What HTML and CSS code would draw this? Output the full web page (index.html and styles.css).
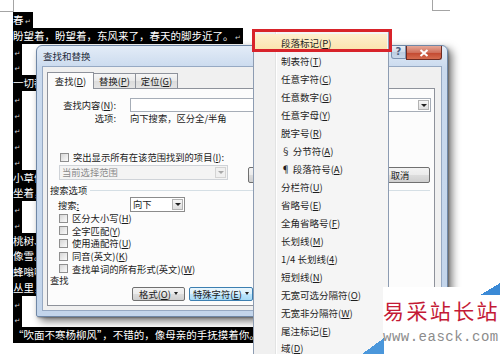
FILE: index.html
```html
<!DOCTYPE html>
<html lang="zh-CN">
<head>
    <meta charset="UTF-8">
    <title>查找和替换 - 特殊字符</title>
    <link rel="stylesheet" href="styles.css">
</head>
<body>
    <!-- Word page behind the dialog (only the visible part of each line) -->
    <div id="page">
        <div class="marks">
            <div class="mark-left"></div>
            <div class="mark-right"></div>
        </div>
        <div class="doc">
            <div class="line"><span class="sel">春<i class="pm">↵</i></span></div>
            <div class="line"><span class="sel">盼望着，盼望着，东风来了，春天的脚步近了。<i class="pm">↵</i></span></div>
            <div class="line"><span class="sel"><i class="pm">↵</i></span></div>
            <div class="line"><span class="sel"><i class="pm">↵</i></span></div>
            <div class="line"><span class="sel">一切都</span></div>
            <div class="line"><span class="sel"><i class="pm">↵</i></span></div>
            <div class="line"><span class="sel"><i class="pm">↵</i></span></div>
            <div class="line"><span class="sel"><i class="pm">↵</i></span></div>
            <div class="line"><span class="sel"><i class="pm">↵</i></span></div>
            <div class="line"><span class="sel"><i class="pm">↵</i></span></div>
            <div class="line"><span class="sel">小草偷</span></div>
            <div class="line"><span class="sel">坐着，</span></div>
            <div class="line"><span class="sel"><i class="pm">↵</i></span></div>
            <div class="line"><span class="sel"><i class="pm">↵</i></span></div>
            <div class="line"><span class="sel">桃树、</span></div>
            <div class="line"><span class="sel">像雪。</span></div>
            <div class="line"><span class="sel">蜂嗡嗡</span></div>
            <div class="line"><span class="sel">丛里，</span></div>
            <div class="line"><span class="sel"><i class="pm">↵</i></span></div>
            <div class="line"><span class="sel"><i class="pm">↵</i></span></div>
            <div class="line"><span class="sel">“吹面不寒杨柳风”，不错的，像母亲的手抚摸着你。</span></div>
        </div>
    </div>

    <!-- Find and replace dialog -->
    <div id="dialog">
        <div class="titlebar">
            <span class="title">查找和替换</span>
            <div class="caption-btns">
                <span class="btn-help">?</span>
                <span class="btn-close">
                    <svg width="10" height="8" viewBox="0 0 10 8"><path d="M1.5 1 L8.5 7 M8.5 1 L1.5 7" stroke="#fff" stroke-width="2"/></svg>
                </span>
            </div>
        </div>
        <div class="client">
            <div class="tabs">
                <span class="tab active">查找(<u>D</u>)</span>
                <span class="tab">替换(<u>P</u>)</span>
                <span class="tab">定位(<u>G</u>)</span>
            </div>
            <div class="panel">
                <div class="row find-row">
                    <span class="lbl">查找内容(<u>N</u>):</span>
                    <div class="combo find-box"><span class="val"></span><span class="drop"></span></div>
                </div>
                <div class="row opts-row">
                    <span class="lbl">选项:</span>
                    <span class="opts">向下搜索，区分全/半角</span>
                </div>
                <div class="row hl-row">
                    <span class="cb"></span>
                    <span>突出显示所有在该范围找到的项目(<u>I</u>):</span>
                </div>
                <div class="row range-row">
                    <div class="combo range-box disabled"><span class="val">当前选择范围</span><span class="drop"></span></div>
                    <span class="btn more-btn"></span>
                    <span class="btn cancel-btn">取消</span>
                </div>
                <div class="row group-row">
                    <span>搜索选项</span>
                    <span class="rule"></span>
                </div>
                <div class="row search-row">
                    <span class="search-lbl">搜索<u>:</u></span>
                    <div class="combo dir-box"><span class="val">向下</span><span class="drop"></span></div>
                </div>
                <div class="checks">
                    <div class="row cb-row"><span class="cb"></span><span>区分大小写(<u>H</u>)</span></div>
                    <div class="row cb-row"><span class="cb"></span><span>全字匹配(<u>Y</u>)</span></div>
                    <div class="row cb-row"><span class="cb"></span><span>使用通配符(<u>U</u>)</span></div>
                    <div class="row cb-row"><span class="cb"></span><span>同音(英文)(<u>K</u>)</span></div>
                    <div class="row cb-row"><span class="cb"></span><span>查找单词的所有形式(英文)(<u>W</u>)</span></div>
                </div>
                <div class="row find-group">查找</div>
                <div class="row btn-row">
                    <span class="btn fmt-btn">格式(<u>O</u>)<i class="caret"></i></span>
                    <span class="btn special-btn">特殊字符(<u>E</u>)<i class="caret"></i></span>
                </div>
            </div>
        </div>
    </div>

    <!-- Special characters menu -->
    <div id="menu">
        <div class="item hot">段落标记(<u>P</u>)</div>
        <div class="item">制表符(<u>T</u>)</div>
        <div class="item">任意字符(<u>C</u>)</div>
        <div class="item">任意数字(<u>G</u>)</div>
        <div class="item">任意字母(<u>Y</u>)</div>
        <div class="item">脱字号(<u>R</u>)</div>
        <div class="item">§ 分节符(<u>A</u>)</div>
        <div class="item">¶ 段落符号(<u>A</u>)</div>
        <div class="item">分栏符(<u>U</u>)</div>
        <div class="item">省略号(<u>E</u>)</div>
        <div class="item">全角省略号(<u>F</u>)</div>
        <div class="item">长划线(<u>M</u>)</div>
        <div class="item">1/4 长划线(<u>4</u>)</div>
        <div class="item">短划线(<u>N</u>)</div>
        <div class="item">无宽可选分隔符(<u>O</u>)</div>
        <div class="item">无宽非分隔符(<u>W</u>)</div>
        <div class="item">尾注标记(<u>E</u>)</div>
        <div class="item last">域(<u>D</u>)</div>
    </div>
    <div id="redbox"></div>

    <!-- Site watermark -->
    <div id="wm">
        <div class="wm-cn">易采站长站</div>
        <div class="wm-url">www.easck.com</div>
    </div>
</body>
</html>
```

FILE: styles.css
```css
body {
    margin: 0;
    width: 500px;
    height: 354px;
    overflow: hidden;
    position: relative;
    background-color: #ffffff;
    font-family: "Noto Sans CJK SC", "Noto Sans", sans-serif;
    color: #1a1a1a;
}

u {
    text-decoration: underline;
    text-underline-offset: 1px;
}

/* page */

.marks {
    display: flex;
    align-items: flex-start;
    height: 12px;
}

.mark-left {
    width: 14px;
    height: 12px;
    box-sizing: border-box;
    border-right: 1px solid #a4a4a4;
    border-bottom: 1px solid #a4a4a4;
}

.mark-right {
    margin-left: 418px;
    width: 18px;
    height: 11px;
    box-sizing: border-box;
    border-left: 1px solid #a4a4a4;
    border-bottom: 1px solid #a4a4a4;
}

.doc {
    padding-left: 13px;
}

.line {
    height: 15.75px;
    line-height: 15.75px;
    font-size: 10.5px;
    white-space: nowrap;
}

.sel {
    display: inline-block;
    height: 15.75px;
    vertical-align: top;
    background-color: #000000;
    color: #ffffff;
}

.pm {
    display: inline-block;
    width: 9px;
    text-align: center;
    font-style: normal;
    font-family: "DejaVu Sans", sans-serif;
    font-size: 7px;
    color: #d0d0d0;
}

/* dialog */

#dialog {
    position: absolute;
    left: 36px;
    top: 45px;
    width: 412px;
    height: 272px;
    box-sizing: border-box;
    padding: 0 5px 5px;
    display: flex;
    flex-direction: column;
    border: 1px solid #6f87a6;
    border-radius: 6px 6px 2px 2px;
    background: linear-gradient(#e3ecf7, #cadaee 22px, #c3d5eb);
    box-shadow: 4px 4px 9px rgba(0, 0, 0, 0.55), 1px 1px 2px rgba(0, 0, 0, 0.3);
}

.titlebar {
    display: flex;
    align-items: flex-start;
    height: 20px;
}

.title {
    padding-left: 1px;
    line-height: 20px;
    font-size: 9.5px;
    color: #1e2a3a;
}

.caption-btns {
    margin-left: auto;
    display: flex;
}

.btn-help {
    width: 15px;
    height: 13px;
    box-sizing: border-box;
    border: 1px solid #7d93b2;
    border-top: none;
    border-radius: 0 0 0 3px;
    background: linear-gradient(#e8eef6, #cfdbea 50%, #bccce1 51%, #c9d8ea);
    font: bold 10px/12px "DejaVu Sans", sans-serif;
    color: #4d6182;
    text-align: center;
}

.btn-close {
    width: 36px;
    height: 14px;
    box-sizing: border-box;
    display: flex;
    align-items: center;
    justify-content: center;
    border: 1px solid #6d2b22;
    border-top: none;
    border-radius: 0 0 3px 0;
    background: linear-gradient(#e6a898, #d0705c 50%, #c2472f 51%, #d66c4f);
}

.client {
    flex: 1;
    display: flex;
    flex-direction: column;
    box-sizing: border-box;
    padding: 5px 6px 4px 4px;
    border: 1px solid #96a9c3;
    background-color: #f0f0f0;
    font-size: 9.3px;
}

.tabs {
    display: flex;
    align-items: flex-end;
    height: 17px;
    margin-bottom: -1px;
    position: relative;
    z-index: 1;
}

.tab {
    width: 43px;
    height: 15px;
    margin-bottom: 1px;
    margin-left: -1px;
    box-sizing: border-box;
    border: 1px solid #8e929b;
    border-bottom: none;
    background: linear-gradient(#f6f6f6, #e9e9e9 50%, #dcdcdc 51%, #e4e4e4);
    text-align: center;
    line-height: 14px;
}

.tab.active {
    width: 47px;
    height: 17px;
    margin-bottom: 0;
    margin-left: 0;
    background: #fcfcfc;
    line-height: 16px;
}

.panel {
    flex: 1;
    display: flex;
    flex-direction: column;
    box-sizing: border-box;
    border: 1px solid #8e929b;
    background-color: #fcfcfc;
}

.row {
    display: flex;
    align-items: center;
    white-space: nowrap;
}

.lbl {
    width: 68px;
    text-align: right;
}

.find-row {
    height: 14px;
    margin-top: 9px;
}

.opts-row {
    height: 11px;
}

.opts {
    margin-left: 14px;
}

.combo {
    display: flex;
    align-items: stretch;
    box-sizing: border-box;
    border: 1px solid #a6adb7;
    background-color: #ffffff;
}

.combo .val {
    flex: 1;
    padding-left: 2px;
    line-height: 13px;
}

.combo .drop {
    width: 11px;
    margin: 1px;
    box-sizing: border-box;
    display: flex;
    align-items: center;
    justify-content: center;
    border: 1px solid #b3b3b3;
    background: linear-gradient(#f7f7f7, #dedede);
}

.combo .drop::after {
    content: "";
    border-left: 3px solid transparent;
    border-right: 3px solid transparent;
    border-top: 3px solid #222222;
}

.find-box {
    margin-left: 14px;
    width: 301px;
    height: 14px;
}

.hl-row {
    height: 12px;
    margin-top: 28px;
    padding-left: 12px;
}

.cb {
    width: 9px;
    height: 9px;
    margin-right: 4px;
    box-sizing: border-box;
    border: 1px solid #8f8f8f;
    background: linear-gradient(135deg, #d6d6d6, #fbfbfb);
}

.range-row {
    height: 18px;
    margin-top: 2px;
}

.range-box {
    align-self: flex-start;
    margin-left: 11px;
    width: 169px;
    height: 15px;
    background-color: #f4f4f4;
    border-color: #cfd3d8;
    color: #8a8a8a;
}

.range-box .drop {
    border-color: #d4d4d4;
    background: #f0f0f0;
}

.range-box .drop::after {
    border-top-color: #a8a8a8;
}

.btn {
    box-sizing: border-box;
    display: flex;
    align-items: center;
    justify-content: center;
    border: 1px solid #707070;
    border-radius: 2px;
    background: linear-gradient(#f3f3f3, #ebebeb 50%, #dddddd 51%, #cfcfcf);
}

.more-btn {
    align-self: flex-end;
    margin-left: 20px;
    width: 90px;
    height: 16px;
}

.cancel-btn {
    align-self: flex-end;
    margin-left: auto;
    margin-right: 4px;
    width: 60px;
    height: 16px;
}

.group-row {
    height: 12px;
    margin-top: 1px;
    padding-left: 2px;
}

.rule {
    flex: 1;
    height: 1px;
    margin: 0 4px 0 3px;
    background-color: #d5dfe5;
}

.search-row {
    height: 15px;
    margin-top: 1px;
}

.search-lbl {
    width: 82px;
    padding-left: 10px;
    box-sizing: border-box;
}

.dir-box {
    width: 55px;
    height: 15px;
    border-color: #8c8c8c;
}

.cb-row {
    height: 12.6px;
    padding-left: 11px;
}

.find-group {
    height: 10px;
    padding-left: 2px;
}

.btn-row {
    height: 14px;
    margin-top: 2px;
    padding-left: 84px;
}

.btn-row .btn {
    height: 14px;
}

.fmt-btn {
    width: 53px;
}

.special-btn {
    width: 64px;
    margin-left: 4px;
    border-color: #3c7fb1;
    background: linear-gradient(#eaf6fd, #d9f0fc 50%, #bee6fd 51%, #a7d9f5);
}

.caret {
    margin-left: 3px;
    border-left: 2.5px solid transparent;
    border-right: 2.5px solid transparent;
    border-top: 3px solid #222222;
}

/* menu */

#menu {
    position: absolute;
    left: 253px;
    top: 30px;
    width: 136px;
    height: 340px;
    box-sizing: border-box;
    padding-top: 3px;
    border: 1px solid #8d9cb2;
    background: linear-gradient(to right, #f0f0f0 0 21px, #e2e3e3 21px 22px, #ffffff 22px 23px, #f5f5f5 23px);
    font-size: 9.5px;
}

.item {
    height: 18px;
    line-height: 18px;
    padding-left: 27px;
    white-space: nowrap;
    color: #1e1e1e;
}

.item.last {
    height: 13px;
    line-height: 16px;
}

.item.hot {
    margin: 0 1px;
    padding-left: 26px;
    background: linear-gradient(#fdf0cf, #fbe2a8);
}

#redbox {
    position: absolute;
    left: 252px;
    top: 29px;
    width: 140px;
    height: 23px;
    box-sizing: border-box;
    border: 3px solid #d8232a;
}

/* watermark */

#wm {
    position: absolute;
    left: 362px;
    top: 283px;
    width: 138px;
    height: 71px;
    box-sizing: border-box;
    padding: 15px 0 0 21px;
    background:
        linear-gradient(to bottom right, transparent 50%, #3b8ad6 50%) right 0 top 0 / 20px 12px no-repeat,
        linear-gradient(to bottom right, transparent 50%, #4b97db 50%) left 0 bottom 0 / 22px 16px no-repeat,
        linear-gradient(#ffffff, #ffffff) left 21px top 4px / 117px 67px no-repeat;
}

.wm-cn {
    font-size: 21px;
    line-height: 24px;
    letter-spacing: 2.4px;
    color: #c41a36;
}

.wm-url {
    margin-top: 8px;
    font-family: "Liberation Mono", "DejaVu Sans Mono", monospace;
    font-size: 14px;
    line-height: 14px;
    letter-spacing: 0.5px;
    color: #8c8c8c;
}
```
